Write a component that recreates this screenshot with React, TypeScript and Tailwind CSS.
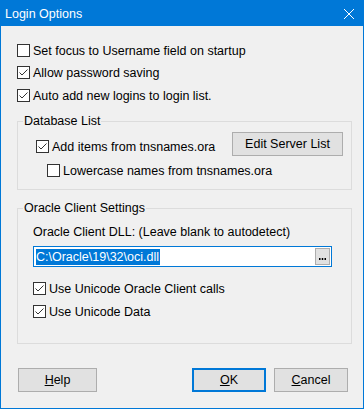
import React from "react";

const font = { fontFamily: '"Liberation Sans", Arial, sans-serif' };

function Check({ checked }: { checked: boolean }) {
  return (
    <div className="w-[13px] h-[13px] border border-[#333333] bg-white flex-none relative">
      {checked && (
        <svg width="11" height="11" viewBox="0 0 11 11" className="absolute left-0 top-0">
          <polyline points="1.5,5.5 4,8 9.5,2.5" fill="none" stroke="#333333" strokeWidth="1" />
        </svg>
      )}
    </div>
  );
}

function CheckRow({ checked, label, className = "" }: { checked: boolean; label: string; className?: string }) {
  return (
    <div className={"flex items-center h-[13px] " + className}>
      <Check checked={checked} />
      <span className="ml-[3px] text-[12.5px] leading-[16px] text-black whitespace-nowrap">{label}</span>
    </div>
  );
}

function Btn({ children, className = "" }: { children: React.ReactNode; className?: string }) {
  return (
    <div
      className={
        "h-[24px] flex items-center justify-center bg-[#e1e1e1] text-[12.5px] text-black " + className
      }
    >
      {children}
    </div>
  );
}

export default function App() {
  return (
    <div style={font} className="w-[364px] h-[409px] flex flex-col border border-[#0078d7] bg-[#f0f0f0] overflow-hidden">
      <div className="h-[25px] bg-[#0078d7] flex items-center justify-between pl-[4px] pr-[9px] flex-none">
        <span className="text-white text-[12.5px] leading-[16px]">Login Options</span>
        <svg width="10" height="10" viewBox="0 0 10 10" className="mt-[1px]">
          <line x1="0" y1="0" x2="10" y2="10" stroke="white" strokeWidth="1" />
          <line x1="10" y1="0" x2="0" y2="10" stroke="white" strokeWidth="1" />
        </svg>
      </div>

      <div className="flex flex-col pl-[16px] pr-[11px]">
        <CheckRow checked={false} label="Set focus to Username field on startup" className="mt-[18px]" />
        <CheckRow checked={true} label="Allow password saving" className="mt-[9px]" />
        <CheckRow checked={true} label="Auto add new logins to login list." className="mt-[10px]" />

        <div className="relative mt-[19px] h-[69px] border border-[#dcdcdc] pt-[10px] pl-[18px] pr-[8px]">
          <span className="absolute top-[-9px] left-[5px] px-[1px] bg-[#f0f0f0] text-[12.5px] leading-[16px] text-black">
            Database List
          </span>
          <div className="flex items-start justify-between">
            <CheckRow checked={true} label="Add items from tnsnames.ora" className="mt-[8px]" />
            <Btn className="w-[111px] border border-[#adadad]">Edit Server List</Btn>
          </div>
          <CheckRow checked={false} label="Lowercase names from tnsnames.ora" className="mt-[8px] ml-[11px]" />
        </div>

        <div className="relative mt-[18px] h-[136px] border border-[#dcdcdc] pl-[15px] pt-[15px]">
          <span className="absolute top-[-9px] left-[5px] px-[1px] bg-[#f0f0f0] text-[12.5px] leading-[16px] text-black">
            Oracle Client Settings
          </span>
          <div className="text-[12.5px] leading-[16px] text-black">Oracle Client DLL: (Leave blank to autodetect)</div>
          <div className="mt-[6px] w-[299px] h-[21px] border border-[#0078d7] bg-white flex items-center pl-[2px] pr-[1px]">
            <span className="bg-[#0078d7] text-white text-[12.5px] leading-[16px] pr-[1px]">C:\Oracle\19\32\oci.dll</span>
            <div className="ml-auto w-[15px] h-[17px] border border-[#adadad] bg-[#e1e1e1] flex items-end justify-center pb-[4px]">
              <svg width="7" height="2" viewBox="0 0 7 2">
                <rect x="0" y="0" width="1.5" height="2" fill="#000" />
                <rect x="2.75" y="0" width="1.5" height="2" fill="#000" />
                <rect x="5.5" y="0" width="1.5" height="2" fill="#000" />
              </svg>
            </div>
          </div>
          <CheckRow checked={true} label="Use Unicode Oracle Client calls" className="mt-[15px]" />
          <CheckRow checked={true} label="Use Unicode Data" className="mt-[10px]" />
        </div>

        <div className="flex items-center mt-[24px] pr-[4px]">
          <Btn className="w-[79px] border border-[#adadad] ml-[1px]">
            <span><span className="underline">H</span>elp</span>
          </Btn>
          <Btn className="w-[74px] border-2 border-[#0078d7] ml-auto">
            <span><span className="underline">O</span>K</span>
          </Btn>
          <Btn className="w-[74px] border border-[#adadad] ml-[8px]">
            <span><span className="underline">C</span>ancel</span>
          </Btn>
        </div>
      </div>
    </div>
  );
}
